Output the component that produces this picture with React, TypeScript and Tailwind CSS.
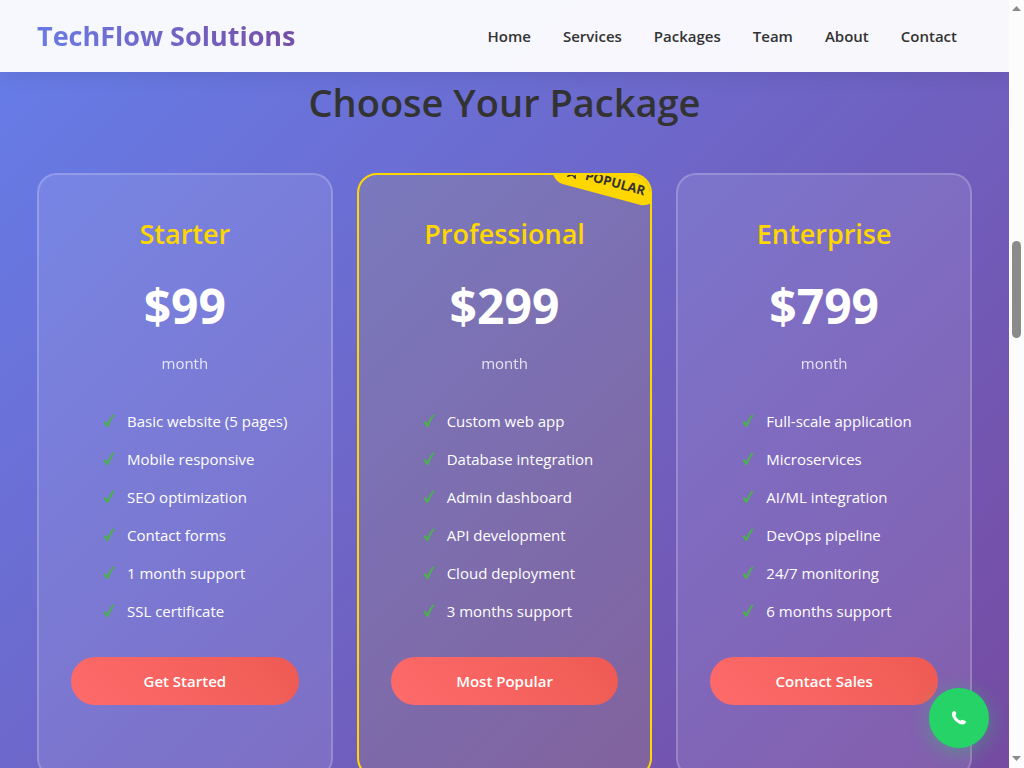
const navLinks = ["Home", "Services", "Packages", "Team", "About", "Contact"];

type Plan = {
  name: string;
  price: string;
  features: string[];
  action: string;
  popular?: boolean;
};

const plans: Plan[] = [
  {
    name: "Starter",
    price: "$99",
    features: ["Basic website (5 pages)", "Mobile responsive", "SEO optimization", "Contact forms", "1 month support", "SSL certificate"],
    action: "Get Started",
  },
  {
    name: "Professional",
    price: "$299",
    features: ["Custom web app", "Database integration", "Admin dashboard", "API development", "Cloud deployment", "3 months support"],
    action: "Most Popular",
    popular: true,
  },
  {
    name: "Enterprise",
    price: "$799",
    features: ["Full-scale application", "Microservices", "AI/ML integration", "DevOps pipeline", "24/7 monitoring", "6 months support"],
    action: "Contact Sales",
  },
];

function Check() {
  return (
    <svg viewBox="0 0 12 14" className="h-[14px] w-3 shrink-0" aria-hidden="true">
      <path d="M0.4 8.4 L2.6 7 Q3.7 8.3 4.3 9.8 Q6.6 4.4 9.6 0.8 L11.8 0.8 Q7.8 6.4 5.5 12.6 L3.4 13 Q2.4 10.2 0.4 8.4 Z" fill="#4caf50" />
    </svg>
  );
}

function PlanCard({ plan }: { plan: Plan }) {
  const tone = plan.popular ? "border-[#ffd700] bg-[#ffd700]/10" : "border-white/20 bg-white/10";
  return (
    <article className={`relative flex-1 overflow-hidden rounded-[20px] border-2 px-8 pt-9 pb-[71px] text-center text-white ${tone}`}>
      {plan.popular && (
        <div className="absolute -top-[10px] -right-[10px] flex rotate-[15deg] items-center gap-[6px] rounded-[20px] bg-[#ffd700] px-[14px] py-1 text-[13px] leading-[22px] font-bold text-[#333]">
          <svg viewBox="0 0 14 14" className="size-[14px]" fill="none" stroke="currentColor" strokeWidth="1.3" aria-hidden="true">
            <path d="M7 1 L8.6 5.2 L13 5.4 L9.6 8.2 L10.8 13.2 L7 10.7 L3.2 13.2 L4.4 8.2 L1 5.4 L5.4 5.2 Z" />
          </svg>
          POPULAR
        </div>
      )}
      <h3 className="text-[27px] leading-[46px] font-semibold text-[#ffd700]">{plan.name}</h3>
      <p className="mt-[11px] text-[48px] leading-[76px] font-bold">{plan.price}</p>
      <p className="mt-[6px] text-[15px] leading-[26px] opacity-80">month</p>
      <ul className="mt-[26px] pl-8 text-left text-[15px]">
        {plan.features.map((feature) => (
          <li key={feature} className="flex h-[38px] items-center gap-3 whitespace-nowrap">
            <Check />
            {feature}
          </li>
        ))}
      </ul>
      <button type="button" className="mt-[27px] h-12 w-full rounded-full bg-linear-45 from-[#ff6b6b] to-[#ee5a52] text-[15px] font-semibold">
        {plan.action}
      </button>
    </article>
  );
}

export default function App() {
  return (
    <div className="flex h-screen overflow-hidden bg-[#fcfcfc] font-['Open_Sans','Noto_Sans',sans-serif]">
      <div className="relative flex flex-1 flex-col overflow-hidden bg-[linear-gradient(135deg,#667eea_0%,#764ba2_100%)]">
        <header className="z-10 flex h-[72px] shrink-0 items-center justify-between bg-white/95 pt-px pr-[52px] pl-[37px] shadow-[0_2px_20px_rgba(0,0,0,0.1)]">
          <a href="#home" className="bg-linear-45 from-[#667eea] to-[#764ba2] bg-clip-text text-[27px] font-bold text-transparent">
            TechFlow Solutions
          </a>
          <nav className="flex gap-8 text-[15px] font-semibold text-[#333]">
            {navLinks.map((label) => (
              <a key={label} href={`#${label.toLowerCase()}`}>
                {label}
              </a>
            ))}
          </nav>
        </header>
        <main className="min-h-0 flex-1 px-[37px]">
          <h2 className="text-center text-[38px] leading-[60px] font-semibold text-[#333]">Choose Your Package</h2>
          <div className="mt-[41px] flex gap-6">
            {plans.map((plan) => (
              <PlanCard key={plan.name} plan={plan} />
            ))}
          </div>
        </main>
        <button
          type="button"
          aria-label="Call us"
          className="absolute right-5 bottom-5 z-10 flex size-[60px] items-center justify-center rounded-full bg-[#25d366] text-white shadow-[0_4px_20px_rgba(37,211,102,0.4)]"
        >
          <svg viewBox="0 0 16 16" className="size-4" fill="currentColor" aria-hidden="true">
            <path d="M0.9 3.2 Q1.4 1 3.2 0.9 Q5 1.2 5.2 3.6 Q5.3 5 4.4 5.8 Q5.8 9 9.4 10.8 Q10.4 9.7 11.8 9.9 Q14.8 10.3 15.1 11.8 Q14.9 14.2 12.2 14.4 Q8 14.5 4.6 11.2 Q0.6 7.2 0.9 3.2 Z" />
          </svg>
        </button>
      </div>
      <div className="flex w-[15px] shrink-0 flex-col items-center justify-between pt-[6px] pb-[7px]" aria-hidden="true">
        <svg viewBox="0 0 9 5" className="h-[5px] w-[9px]" fill="#8b8b8b">
          <path d="M4.5 0 L9 5 H0 Z" />
        </svg>
        <div className="mb-[189px] h-[97px] w-[9px] rounded-full bg-[#8b8b8b]" />
        <svg viewBox="0 0 9 5" className="h-[5px] w-[9px]" fill="#8b8b8b">
          <path d="M4.5 5 L9 0 H0 Z" />
        </svg>
      </div>
    </div>
  );
}
